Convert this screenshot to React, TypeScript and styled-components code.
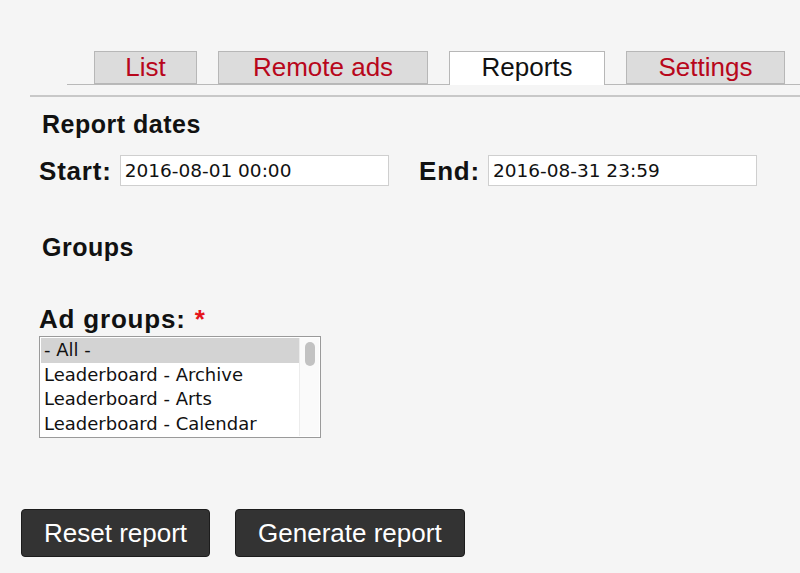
import styled, { createGlobalStyle } from "styled-components";
import { FC } from "react";

const GlobalStyle = createGlobalStyle`
  html, body {
    margin: 0;
    padding: 0;
    background: #f5f5f5;
    font-family: "Liberation Sans", Arial, sans-serif;
  }
`;

const Page = styled.div`
  width: 800px;
  height: 573px;
  padding-top: 51px;
  box-sizing: border-box;
  overflow: hidden;
`;

const TabBar = styled.div`
  display: flex;
  gap: 21px;
  margin-left: 67px;
  padding-left: 27px;
  height: 33px;
  border-bottom: 1px solid #b9b9b9;
`;

const Tab = styled.div<{ $active?: boolean; $width: number }>`
  width: ${p => p.$width}px;
  height: ${p => (p.$active ? 34 : 33)}px;
  box-sizing: border-box;
  border: 1px solid #b7b7b7;
  border-bottom: ${p => (p.$active ? "none" : "1px solid #b7b7b7")};
  background: ${p => (p.$active ? "#fff" : "#dcdcdc")};
  color: ${p => (p.$active ? "#111" : "#b8071b")};
  font-size: 26px;
  line-height: 31px;
  text-align: center;
  white-space: nowrap;
`;

const Rule = styled.div`
  margin: 10px 0 0 30px;
  height: 2px;
  background: #c8c8c8;
`;

const Content = styled.div`
  padding-left: 39px;
`;

const Heading = styled.h2<{ $top: number }>`
  margin: ${p => p.$top}px 0 0 3px;
  font-size: 25px;
  letter-spacing: 0.5px;
  line-height: 28px;
  font-weight: bold;
  color: #111;
`;

const DateRow = styled.div`
  display: flex;
  align-items: center;
  margin-top: 17px;
`;

const Field = styled.div<{ $width: number }>`
  display: flex;
  align-items: center;
  width: ${p => p.$width}px;
`;

const Label = styled.label`
  font-size: 26px;
  letter-spacing: 0.8px;
  line-height: 28px;
  font-weight: bold;
  color: #111;
  margin-right: 8px;
  white-space: nowrap;
`;

const TextInput = styled.input`
  width: 269px;
  height: 31px;
  box-sizing: border-box;
  border: 1px solid #cfcfcf;
  background: #fff;
  padding: 0 4px;
  font-family: "DejaVu Sans", sans-serif;
  font-size: 18.5px;
  color: #111;
  outline: none;
`;

const Required = styled.span`
  color: #e5141b;
  margin-left: 9px;
`;

const GroupLabel = styled(Label)`
  display: block;
  margin-top: 44px;
`;

const ListBox = styled.div`
  margin-top: 3px;
  width: 282px;
  height: 102px;
  box-sizing: border-box;
  border: 1px solid #9a9a9a;
  background: #fff;
  display: flex;
  padding: 1px;
`;

const Options = styled.div`
  flex: 1;
`;

const Option = styled.div<{ $selected?: boolean }>`
  height: 24.5px;
  line-height: 24.5px;
  padding-left: 3px;
  font-family: "DejaVu Sans", sans-serif;
  font-size: 18px;
  color: #111;
  white-space: nowrap;
  overflow: hidden;
  background: ${p => (p.$selected ? "#d3d3d3" : "transparent")};
`;

const ScrollTrack = styled.div`
  width: 19px;
  border-left: 1px solid #ececec;
  background: #fafafa;
  display: flex;
  justify-content: center;
  padding-top: 4px;
`;

const ScrollThumb = styled.div`
  width: 10px;
  height: 24px;
  border-radius: 5px;
  background: #c2c2c2;
`;

const Actions = styled.div`
  display: flex;
  gap: 25px;
  margin: 71px 0 0 21px;
`;

const Button = styled.button`
  height: 48px;
  padding: 0 22px;
  background: #333;
  border: 1px solid #1c1c1c;
  border-radius: 4px;
  color: #fff;
  font-family: "Liberation Sans", Arial, sans-serif;
  font-size: 26px;
  cursor: pointer;
`;

const tabs = [
  { name: "List", width: 103 },
  { name: "Remote ads", width: 210 },
  { name: "Reports", width: 156, active: true },
  { name: "Settings", width: 159 },
];

const groups = ["- All -", "Leaderboard - Archive", "Leaderboard - Arts", "Leaderboard - Calendar"];

const App: FC = () => {
  return (
    <>
      <GlobalStyle />
      <Page>
        <TabBar>
          {tabs.map(t => (
            <Tab key={t.name} $width={t.width} $active={t.active}>
              {t.name}
            </Tab>
          ))}
        </TabBar>
        <Rule />
        <Content>
          <Heading $top={13}>Report dates</Heading>
          <DateRow>
            <Field $width={380}>
              <Label>Start:</Label>
              <TextInput defaultValue="2016-08-01 00:00" />
            </Field>
            <Field $width={380}>
              <Label>End:</Label>
              <TextInput defaultValue="2016-08-31 23:59" />
            </Field>
          </DateRow>
          <Heading $top={47}>Groups</Heading>
          <GroupLabel>
            Ad groups:<Required>*</Required>
          </GroupLabel>
          <ListBox>
            <Options>
              {groups.map((g, i) => (
                <Option key={g} $selected={i === 0}>
                  {g}
                </Option>
              ))}
            </Options>
            <ScrollTrack>
              <ScrollThumb />
            </ScrollTrack>
          </ListBox>
        </Content>
        <Actions>
          <Button>Reset report</Button>
          <Button>Generate report</Button>
        </Actions>
      </Page>
    </>
  );
};

export default App;
